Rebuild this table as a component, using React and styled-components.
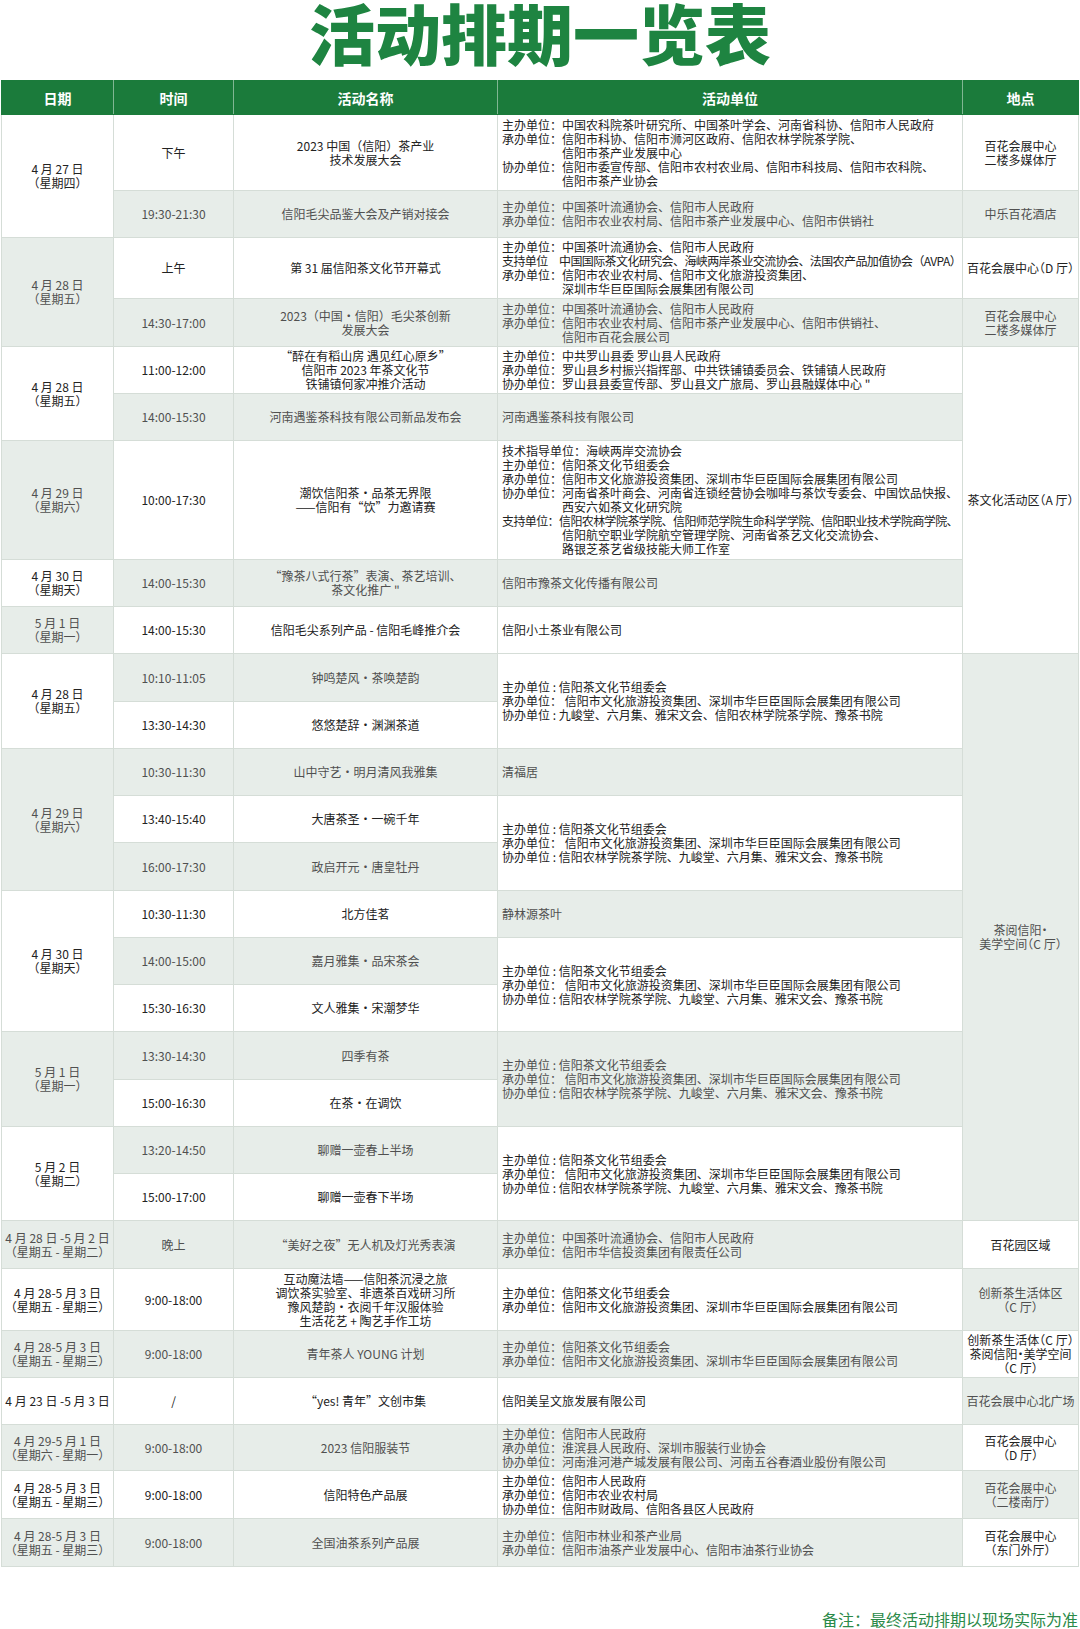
import React from 'react';
import styled, { createGlobalStyle, css } from 'styled-components';

const Global = createGlobalStyle`
  html, body { margin: 0; padding: 0; background: #fff; }
  body { font-family: "Noto Sans CJK SC", "Noto Sans", sans-serif; color: #222; }
`;

const Page = styled.div`
  width: 1080px;
  padding-bottom: 8px;
`;

const Title = styled.h1`
  margin: 0;
  box-sizing: border-box;
  height: 80px;
  padding-top: 7px;
  line-height: 60px;
  text-align: center;
  font-family: "Liberation Sans", "Noto Sans CJK SC", sans-serif;
  font-size: 66px;
  font-weight: 900;
  color: #1e8441;
`;

const Table = styled.table`
  margin-left: 1px;
  width: 1077px;
  table-layout: fixed;
  border-collapse: collapse;
  font-size: 12px;
  line-height: 14px;
`;

const HeadRow = styled.tr`
  height: 34px;
  background: #1b7b3b;
`;

const HeadCell = styled.th`
  color: #fff;
  font-size: 14px;
  font-weight: 700;
  padding: 0;
  border: 1px solid #1b7b3b;
  border-right: 1px solid rgba(255, 255, 255, 0.45);
  &:last-child { border-right-color: #1b7b3b; }
`;

const Row = styled.tr`
  height: ${(p) => p.$h}px;
`;

const cellBase = css`
  border: 1px solid #d5ddd7;
  vertical-align: middle;
  background: ${(p) => (p.$shade ? '#e7ede9' : '#ffffff')};
  color: ${(p) => (p.$shade ? '#505050' : '#222222')};
`;

const Cell = styled.td`
  ${cellBase}
  text-align: center;
  padding: 0 2px;
  white-space: nowrap;
  ${(p) => p.$halt && css`font-feature-settings: "halt";`}
`;

const UnitCell = styled.td`
  ${cellBase}
  text-align: left;
  padding: 0 3px 0 4px;
`;

const Line = styled.div`
  white-space: nowrap;
`;

const UnitLine = styled.div`
  white-space: nowrap;
  padding-left: ${(p) => (p.$indent ? 60 : 0)}px;
  letter-spacing: ${(p) => (p.$squeeze ? '-0.6px' : '0')};
`;

const Footer = styled.div`
  margin-top: 40px;
  padding-right: 2px;
  text-align: right;
  font-size: 16px;
  line-height: 24px;
  color: #2b8a49;
`;

const c = (kind, lines, shade, span = 1) => ({ kind, lines, shade, span });
const u = (lines, shade, span = 1) => ({ kind: 'unit', lines, shade, span });

const FEST_A = [
  '主办单位 : 信阳茶文化节组委会',
  '承办单位： 信阳市文化旅游投资集团、深圳市华巨臣国际会展集团有限公司',
  '协办单位 : 九峻堂、六月集、雅宋文会、信阳农林学院茶学院、豫茶书院',
];
const FEST_B = [
  '主办单位 : 信阳茶文化节组委会',
  '承办单位： 信阳市文化旅游投资集团、深圳市华巨臣国际会展集团有限公司',
  '协办单位 : 信阳农林学院茶学院、九峻堂、六月集、雅宋文会、豫茶书院',
];
const FEST_C = [
  '主办单位：信阳茶文化节组委会',
  '承办单位：信阳市文化旅游投资集团、深圳市华巨臣国际会展集团有限公司',
];
const D_MULTI = ['4 月 28-5 月 3 日', '（星期五 - 星期三）'];

const rows = [
  { h: 76, cells: [
    c('date', ['4 月 27 日', '（星期四）'], false, 2),
    c('time', ['下午'], false),
    c('name', ['2023 中国（信阳）茶产业', '技术发展大会'], false),
    u(['主办单位：中国农科院茶叶研究所、中国茶叶学会、河南省科协、信阳市人民政府',
      '承办单位：信阳市科协、信阳市浉河区政府、信阳农林学院茶学院、',
      '>信阳市茶产业发展中心',
      '协办单位：信阳市委宣传部、信阳市农村农业局、信阳市科技局、信阳市农科院、',
      '>信阳市茶产业协会'], false),
    c('loc', ['百花会展中心', '二楼多媒体厅'], false),
  ] },
  { h: 47, cells: [
    c('time', ['19:30-21:30'], true),
    c('name', ['信阳毛尖品鉴大会及产销对接会'], true),
    u(['主办单位：中国茶叶流通协会、信阳市人民政府', '承办单位：信阳市农业农村局、信阳市茶产业发展中心、信阳市供销社'], true),
    c('loc', ['中乐百花酒店'], true),
  ] },
  { h: 61, cells: [
    c('date', ['4 月 28 日', '（星期五）'], true, 2),
    c('time', ['上午'], false),
    c('name', ['第 31 届信阳茶文化节开幕式'], false),
    u(['主办单位：中国茶叶流通协会、信阳市人民政府',
      '~支持单位　中国国际茶文化研究会、海峡两岸茶业交流协会、法国农产品加值协会（AVPA）',
      '承办单位：信阳市农业农村局、信阳市文化旅游投资集团、',
      '>深圳市华巨臣国际会展集团有限公司'], false),
    c('loc', ['百花会展中心（D 厅）'], false),
  ] },
  { h: 48, cells: [
    c('time', ['14:30-17:00'], true),
    c('name', ['2023（中国·信阳）毛尖茶创新', '发展大会'], true),
    u(['主办单位：中国茶叶流通协会、信阳市人民政府',
      '承办单位：信阳市农业农村局、信阳市茶产业发展中心、信阳市供销社、',
      '>信阳市百花会展公司'], true),
    c('loc', ['百花会展中心', '二楼多媒体厅'], true),
  ] },
  { h: 47, cells: [
    c('date', ['4 月 28 日', '（星期五）'], false, 2),
    c('time', ['11:00-12:00'], false),
    c('name', ['“醉在有稻山房 遇见红心原乡”', '信阳市 2023 年茶文化节', '铁铺镇何家冲推介活动'], false),
    u(['主办单位：中共罗山县委 罗山县人民政府',
      '承办单位：罗山县乡村振兴指挥部、中共铁铺镇委员会、铁铺镇人民政府',
      '协办单位：罗山县县委宣传部、罗山县文广旅局、罗山县融媒体中心 "'], false),
    c('loc', ['茶文化活动区（A 厅）'], false, 5),
  ] },
  { h: 47, cells: [
    c('time', ['14:00-15:30'], true),
    c('name', ['河南遇鉴茶科技有限公司新品发布会'], true),
    u(['河南遇鉴茶科技有限公司'], true),
  ] },
  { h: 119, cells: [
    c('date', ['4 月 29 日', '（星期六）'], true),
    c('time', ['10:00-17:30'], false),
    c('name', ['潮饮信阳茶·品茶无界限', '——信阳有“饮”力邀请赛'], false),
    u(['技术指导单位：海峡两岸交流协会',
      '主办单位：信阳茶文化节组委会',
      '承办单位：信阳市文化旅游投资集团、深圳市华巨臣国际会展集团有限公司',
      '协办单位：河南省茶叶商会、河南省连锁经营协会咖啡与茶饮专委会、中国饮品快报、',
      '>西安六如茶文化研究院',
      '~支持单位：信阳农林学院茶学院、信阳师范学院生命科学学院、信阳职业技术学院商学院、',
      '>信阳航空职业学院航空管理学院、河南省茶艺文化交流协会、',
      '>路银芝茶艺省级技能大师工作室'], false),
  ] },
  { h: 47, cells: [
    c('date', ['4 月 30 日', '（星期天）'], false),
    c('time', ['14:00-15:30'], true),
    c('name', ['“豫茶八式行茶”表演、茶艺培训、', '茶文化推广 "'], true),
    u(['信阳市豫茶文化传播有限公司'], true),
  ] },
  { h: 47, cells: [
    c('date', ['5 月 1 日', '（星期一）'], true),
    c('time', ['14:00-15:30'], false),
    c('name', ['信阳毛尖系列产品 - 信阳毛峰推介会'], false),
    u(['信阳小土茶业有限公司'], false),
  ] },
  { h: 48, cells: [
    c('date', ['4 月 28 日', '（星期五）'], false, 2),
    c('time', ['10:10-11:05'], true),
    c('name', ['钟鸣楚风·茶唤楚韵'], true),
    u(FEST_A, false, 2),
    c('loc', ['茶阅信阳·', '美学空间（C 厅）'], true, 12),
  ] },
  { h: 47, cells: [
    c('time', ['13:30-14:30'], false),
    c('name', ['悠悠楚辞·渊渊茶道'], false),
  ] },
  { h: 47, cells: [
    c('date', ['4 月 29 日', '（星期六）'], true, 3),
    c('time', ['10:30-11:30'], true),
    c('name', ['山中守艺·明月清风我雅集'], true),
    u(['清福居'], true),
  ] },
  { h: 47, cells: [
    c('time', ['13:40-15:40'], false),
    c('name', ['大唐茶圣·一碗千年'], false),
    u(FEST_B, false, 2),
  ] },
  { h: 48, cells: [
    c('time', ['16:00-17:30'], true),
    c('name', ['政启开元·唐皇牡丹'], true),
  ] },
  { h: 47, cells: [
    c('date', ['4 月 30 日', '（星期天）'], false, 3),
    c('time', ['10:30-11:30'], false),
    c('name', ['北方佳茗'], false),
    u(['静林源茶叶'], true),
  ] },
  { h: 47, cells: [
    c('time', ['14:00-15:00'], true),
    c('name', ['嘉月雅集·品宋茶会'], true),
    u(FEST_B, false, 2),
  ] },
  { h: 47, cells: [
    c('time', ['15:30-16:30'], false),
    c('name', ['文人雅集·宋潮梦华'], false),
  ] },
  { h: 48, cells: [
    c('date', ['5 月 1 日', '（星期一）'], true, 2),
    c('time', ['13:30-14:30'], true),
    c('name', ['四季有茶'], true),
    u(FEST_B, true, 2),
  ] },
  { h: 47, cells: [
    c('time', ['15:00-16:30'], false),
    c('name', ['在茶·在调饮'], false),
  ] },
  { h: 47, cells: [
    c('date', ['5 月 2 日', '（星期二）'], false, 2),
    c('time', ['13:20-14:50'], true),
    c('name', ['聊赠一壶春上半场'], true),
    u(FEST_B, false, 2),
  ] },
  { h: 47, cells: [
    c('time', ['15:00-17:00'], false),
    c('name', ['聊赠一壶春下半场'], false),
  ] },
  { h: 48, cells: [
    c('date', ['4 月 28 日 -5 月 2 日', '（星期五 - 星期二）'], true),
    c('time', ['晚上'], true),
    c('name', ['“美好之夜”无人机及灯光秀表演'], true),
    u(['主办单位：中国茶叶流通协会、信阳市人民政府', '承办单位：信阳市华信投资集团有限责任公司'], true),
    c('loc', ['百花园区域'], false),
  ] },
  { h: 62, cells: [
    c('date', D_MULTI, false),
    c('time', ['9:00-18:00'], false),
    c('name', ['互动魔法墙——信阳茶沉浸之旅', '调饮茶实验室、非遗茶百戏研习所', '豫风楚韵·衣阅千年汉服体验', '生活花艺 + 陶艺手作工坊'], false),
    u(FEST_C, false),
    c('loc', ['创新茶生活体区', '（C 厅）'], true),
  ] },
  { h: 47, cells: [
    c('date', D_MULTI, true),
    c('time', ['9:00-18:00'], true),
    c('name', ['青年茶人 YOUNG 计划'], true),
    u(FEST_C, true),
    c('loc', ['创新茶生活体（C 厅）', '茶阅信阳·美学空间', '（C 厅）'], false),
  ] },
  { h: 47, cells: [
    c('date', ['4 月 23 日 -5 月 3 日'], false),
    c('time', ['/'], false),
    c('name', ['“yes! 青年”文创市集'], false),
    u(['信阳美呈文旅发展有限公司'], false),
    c('loc', ['百花会展中心北广场'], true),
  ] },
  { h: 46, cells: [
    c('date', ['4 月 29-5 月 1 日', '（星期六 - 星期一）'], true),
    c('time', ['9:00-18:00'], true),
    c('name', ['2023 信阳服装节'], true),
    u(['主办单位：信阳市人民政府', '承办单位：淮滨县人民政府、深圳市服装行业协会', '协办单位：河南淮河港产城发展有限公司、河南五谷春酒业股份有限公司'], true),
    c('loc', ['百花会展中心', '（D 厅）'], false),
  ] },
  { h: 48, cells: [
    c('date', D_MULTI, false),
    c('time', ['9:00-18:00'], false),
    c('name', ['信阳特色产品展'], false),
    u(['主办单位：信阳市人民政府', '承办单位：信阳市农业农村局', '协办单位：信阳市财政局、信阳各县区人民政府'], false),
    c('loc', ['百花会展中心', '（二楼南厅）'], true),
  ] },
  { h: 48, cells: [
    c('date', D_MULTI, true),
    c('time', ['9:00-18:00'], true),
    c('name', ['全国油茶系列产品展'], true),
    u(['主办单位：信阳市林业和茶产业局', '承办单位：信阳市油茶产业发展中心、信阳市油茶行业协会'], true),
    c('loc', ['百花会展中心', '（东门外厅）'], false),
  ] },
];

function renderCell(cell, key) {
  if (cell.kind === 'unit') {
    return (
      <UnitCell key={key} rowSpan={cell.span} $shade={cell.shade}>
        {cell.lines.map((l, i) => {
          const indent = l.startsWith('>');
          const squeeze = l.startsWith('~');
          const text = indent || squeeze ? l.slice(1) : l;
          return (
            <UnitLine key={i} $indent={indent} $squeeze={squeeze}>{text}</UnitLine>
          );
        })}
      </UnitCell>
    );
  }
  const halt = cell.kind === 'date' || cell.kind === 'loc';
  return (
    <Cell key={key} rowSpan={cell.span} $shade={cell.shade} $halt={halt}>
      {cell.lines.map((l, i) => <Line key={i}>{l}</Line>)}
    </Cell>
  );
}

export default function App() {
  return (
    <Page>
      <Global />
      <Title>活动排期一览表</Title>
      <Table>
        <colgroup>
          <col style={{ width: 112 }} />
          <col style={{ width: 120 }} />
          <col style={{ width: 264 }} />
          <col style={{ width: 465 }} />
          <col style={{ width: 116 }} />
        </colgroup>
        <thead>
          <HeadRow>
            <HeadCell>日期</HeadCell>
            <HeadCell>时间</HeadCell>
            <HeadCell>活动名称</HeadCell>
            <HeadCell>活动单位</HeadCell>
            <HeadCell>地点</HeadCell>
          </HeadRow>
        </thead>
        <tbody>
          {rows.map((r, i) => (
            <Row key={i} $h={r.h}>
              {r.cells.map((cell, j) => renderCell(cell, j))}
            </Row>
          ))}
        </tbody>
      </Table>
      <Footer>备注：最终活动排期以现场实际为准</Footer>
    </Page>
  );
}
